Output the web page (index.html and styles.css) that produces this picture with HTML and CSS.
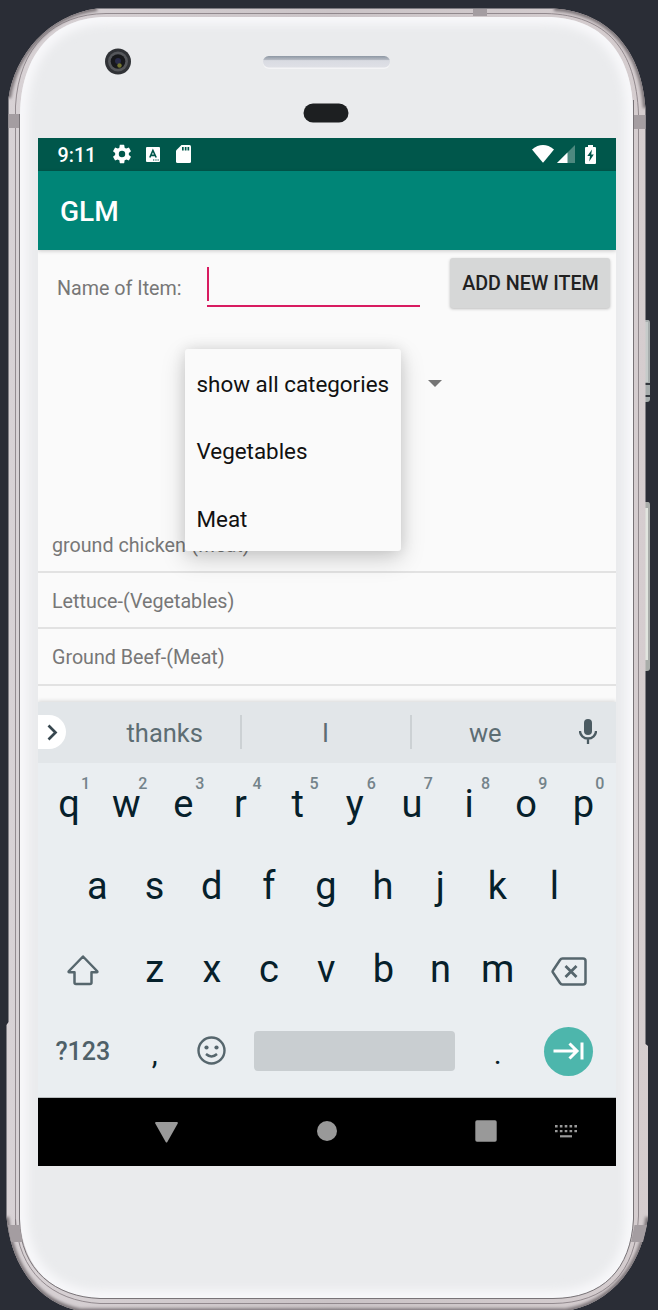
FILE: index.html
```html
<!DOCTYPE html>
<html lang="en">
<head>
<meta charset="utf-8">
<title>GLM</title>
<link rel="stylesheet" href="styles.css">
</head>
<body>
<div class="device">
  <svg class="shell" width="658" height="1310" viewBox="0 0 658 1310" aria-hidden="true">
    <defs>
      <linearGradient id="rimX" x1="0" x2="1" y1="0" y2="0">
        <stop offset="0" stop-color="#9c9498"/><stop offset=".006" stop-color="#d8d2d5"/>
        <stop offset=".5" stop-color="#cbc4c7"/><stop offset=".988" stop-color="#d5cdcf"/><stop offset="1" stop-color="#aaa2a5"/>
      </linearGradient>
      <linearGradient id="mesh" x1="0" x2="0" y1="0" y2="1">
        <stop offset="0" stop-color="#8d97a3"/><stop offset=".32" stop-color="#b5bac3"/><stop offset=".4" stop-color="#d9dbe2"/><stop offset="1" stop-color="#dfe0e6"/>
      </linearGradient>
      <filter id="soft" x="-10%" y="-10%" width="120%" height="120%"><feGaussianBlur stdDeviation="5"/></filter>
      <filter id="edge" x="-10%" y="-10%" width="120%" height="120%"><feGaussianBlur stdDeviation="1.800"/></filter>
      <clipPath id="outer"><path d="M97 8.500H554C610 12 642 52 645.500 108V1044L648 1046V1217C641 1268 610 1304 566 1311H80C38 1303 11 1266 6.500 1217V1025L8.500 1022V98C15 55 48 15 97 8.500Z"/></clipPath>
      <clipPath id="face"><path d="M106 17H546C602 17 633 54 633 114V1219C631 1269 603 1298 553 1298H100C56 1297 23 1271 20 1219V114C21 54 54 17 106 17Z"/></clipPath>
    </defs>
    <path d="M643 320h5q2 0 2 3v76q0 3-3 3h-4Z" fill="#a7adad"/>
    <path d="M645 322h3v60h-3Z" fill="#c6cbca"/>
    <path d="M643 383h7v2h-7Zm0 12h7v2h-7Z" fill="#33373d"/>
    <path d="M643 502h5q2 0 2 3v163q0 3-3 3h-4Z" fill="#a9adaa"/>
    <path d="M645 508h3v152h-3Z" fill="#e1e5df"/>
    <g clip-path="url(#outer)">
      <rect width="658" height="1310" fill="url(#rimX)"/>
      <path d="M8.500 98C15 55 48 15 97 8.500M554 8.500C610 12 642 52 645.500 108M648 1217C641 1268 610 1304 566 1311H80C38 1303 11 1266 6.500 1217" fill="none" stroke="#7b7478" stroke-width="5" filter="url(#edge)"/>
    </g>
    <path d="M15.500 1232V106C19 46 54 14 106 13.500H546C607 15 636 50 638.500 114V1216C636 1273 606 1303 553 1303.500H100C52 1301 18 1272 15.500 1219" fill="none" stroke="#81797d" stroke-width=".8"/>
    <path d="M106 17H546C602 17 633 54 633 114V1219C631 1269 603 1298 553 1298H100C56 1297 23 1271 20 1219V114C21 54 54 17 106 17Z" fill="#eaebed"/>
    <path d="M106 17H546C602 17 633 54 633 114V1219C631 1269 603 1298 553 1298H100C56 1297 23 1271 20 1219V114C21 54 54 17 106 17Z" fill="none" stroke="#f8f8fa" stroke-width="15" filter="url(#soft)" clip-path="url(#face)"/>
    <path d="M633.500 100V1219C631 1269 603 1298.500 553 1298.500H100C56 1297 20 1271 19.500 1219V114" fill="none" stroke="#787377"/>
    <path d="M473 9h14v7h-14ZM8.500 114H19v14H8.500ZM634 115h11.500v14H634ZM8 1225h11.500l3 17H11ZM634.500 1225h12.500l-4 17h-12Z" fill="#a49da1"/>
    <circle cx="118" cy="61.500" r="13" fill="#303236"/>
    <circle cx="118" cy="61.500" r="10" fill="#55575b"/>
    <circle cx="118" cy="61.500" r="7.300" fill="#17181b"/>
    <circle cx="118" cy="61" r="3" fill="#292b49"/>
    <circle cx="119.500" cy="65.500" r="2.200" fill="#73752f"/>
    <rect x="263" y="56" width="127" height="13" rx="6" fill="#f4f4f6"/>
    <rect x="263" y="56" width="127" height="11.500" rx="5.700" fill="url(#mesh)"/>
    <rect x="303.500" y="103.500" width="45" height="19" rx="9.500" fill="#1d1f21"/>
  </svg>

  <main class="screen">
    <header class="status">
      <span class="clock">9:11</span>
      <svg class="gear" width="22" height="22" viewBox="0 0 24 24" fill="#fff"><path d="M19.430 12.980c.040-.320.070-.640.070-.980s-.030-.660-.070-.980l2.110-1.650c.190-.150.240-.420.120-.640l-2-3.460c-.120-.220-.390-.300-.610-.220l-2.490 1c-.520-.400-1.080-.730-1.690-.980l-.380-2.650A.488.488 0 0 0 14 2h-4c-.250 0-.460.180-.490.420l-.380 2.650c-.610.250-1.170.590-1.690.980l-2.490-1c-.230-.090-.490 0-.610.220l-2 3.460c-.130.220-.070.490.120.640l2.110 1.650c-.040.320-.070.650-.070.980s.030.660.070.980l-2.110 1.650c-.190.150-.240.420-.120.640l2 3.460c.120.220.390.300.610.220l2.490-1c.520.400 1.080.730 1.690.980l.380 2.650c.030.240.240.420.490.420h4c.250 0 .460-.180.490-.420l.380-2.650c.610-.250 1.170-.590 1.690-.980l2.490 1c.230.090.490 0 .610-.220l2-3.460c.120-.220.070-.490-.120-.640zM12 15.500a3.500 3.500 0 1 1 0-7 3.500 3.500 0 0 1 0 7z"/></svg>
      <svg class="lang" width="14" height="15" viewBox="0 0 14 15"><rect width="14" height="15" rx="1" fill="#fff"/><path d="M3.800 10.500 6.900 3.500 10.200 10.500M5.100 8.400h3.800" fill="none" stroke="#00574b" stroke-width="1.600"/><path d="M7 12.500h1.300v1H7zm2.300 0h1.300v1H9.300zm2.200 0h1.300v1h-1.300z" fill="#00574b"/></svg>
      <svg class="card" width="15" height="18" viewBox="0 0 15 18"><path d="M5.500 0H13.500Q15 0 15 1.500V16.500Q15 18 13.500 18H1.500Q0 18 0 16.500V5.500Z" fill="#fff"/><path d="M6 2h1.700v3.500H6zm2.800 0h1.700v3.500H8.800zm2.700 0h1.700v3.500h-1.700z" fill="#00574b"/></svg>
      <span class="grow"></span>
      <svg class="wifi" width="22" height="18" viewBox="0 0 22 18"><path d="M0 4.500Q11-4.300 22 4.500L11.500 17.200Q11 17.700 10.500 17.200Z" fill="#fff"/></svg>
      <svg class="signal" width="18" height="18" viewBox="0 0 18 18"><path d="M18 0V18H0Z" fill="#4d897f"/><path d="M10.500 7.500V18H0Z" fill="#fff"/></svg>
      <svg class="battery" width="11" height="19" viewBox="0 0 11 19"><path d="M3 0h5v2h2q1 0 1 1v15q0 1-1 1H1q-1 0-1-1V3q0-1 1-1h2Z" fill="#fff"/><path d="M7 4.500 2.300 11H5l-.8 5.500L8.800 9.500H6.200Z" fill="#00574b"/></svg>
    </header>
    <div class="appbar">GLM</div>

    <section class="content">
      <div class="form">
        <label class="label">Name of Item:</label>
        <div class="field"><span class="caret"></span></div>
        <button class="add">ADD NEW ITEM</button>
      </div>
      <div class="picker">
        <svg class="arrow" width="14" height="7" viewBox="0 0 14 7"><path d="M0 0H14L7 7Z" fill="#757575"/></svg>
        <div class="menu">
          <div class="option">show all categories</div>
          <div class="option">Vegetables</div>
          <div class="option">Meat</div>
        </div>
      </div>
      <div class="list">
        <div class="item">ground chicken-(Meat)</div>
        <div class="item">Lettuce-(Vegetables)</div>
        <div class="item">Ground Beef-(Meat)</div>
      </div>
    </section>

    <section class="keyboard">
      <div class="suggest">
        <div class="more"><svg width="11" height="17" viewBox="0 0 11 17"><path d="M1.500 1.500 8.500 8.500 1.500 15.500" fill="none" stroke="#37474f" stroke-width="2.700"/></svg></div>
        <div class="word first">thanks</div>
        <div class="word">I</div>
        <div class="word last">we</div>
        <svg class="mic" width="18" height="25" viewBox="0 0 18 25"><rect x="5" y="0" width="8" height="16" rx="4" fill="#4b5b62"/><path d="M1 12a8 7.500 0 0 0 16 0M9 19.500V25" fill="none" stroke="#4b5b62" stroke-width="2.300"/></svg>
      </div>
      <div class="row top">
        <div class="key">q<sup>1</sup></div><div class="key">w<sup>2</sup></div><div class="key">e<sup>3</sup></div><div class="key">r<sup>4</sup></div><div class="key">t<sup>5</sup></div><div class="key">y<sup>6</sup></div><div class="key">u<sup>7</sup></div><div class="key">i<sup>8</sup></div><div class="key">o<sup>9</sup></div><div class="key">p<sup>0</sup></div>
      </div>
      <div class="row home">
        <div class="key">a</div><div class="key">s</div><div class="key">d</div><div class="key">f</div><div class="key">g</div><div class="key">h</div><div class="key">j</div><div class="key">k</div><div class="key">l</div>
      </div>
      <div class="row">
        <div class="key wide"><svg class="shift" width="32" height="31" viewBox="0 0 32 31"><path d="M16 1.500 30 16Q31 17.200 29.500 17.200H24.500V27.500Q24.500 29 23 29H9Q7.500 29 7.500 27.500V17.200H2.500Q1 17.200 2 16Z" fill="none" stroke="#56666d" stroke-width="2.500" stroke-linejoin="round"/></svg></div>
        <div class="key">z</div><div class="key">x</div><div class="key">c</div><div class="key">v</div><div class="key">b</div><div class="key">n</div><div class="key">m</div>
        <div class="key wide"><svg class="erase" width="36" height="29" viewBox="0 0 36 29"><path d="M11.500 1.500H32Q34.500 1.500 34.500 4V25Q34.500 27.500 32 27.500H11.500Q10 27.500 9 26L2 15.500Q1.200 14.500 2 13.500L9 3Q10 1.500 11.500 1.500Z" fill="none" stroke="#56666d" stroke-width="2.500"/><path d="M14.500 9 25.500 20M25.500 9 14.500 20" stroke="#56666d" stroke-width="2.800"/></svg></div>
      </div>
      <div class="row">
        <div class="key wide symbols">?123</div>
        <div class="key comma">,</div>
        <div class="key"><svg class="smile" width="29" height="29" viewBox="0 0 29 29"><circle cx="14.500" cy="14.500" r="13" fill="none" stroke="#56666d" stroke-width="2.400"/><circle cx="9.500" cy="11.500" r="2.100" fill="#56666d"/><circle cx="19.500" cy="11.500" r="2.100" fill="#56666d"/><path d="M9 18Q14.500 23 20 18" fill="none" stroke="#56666d" stroke-width="2.400"/></svg></div>
        <div class="key spacekey"><span class="space"></span></div>
        <div class="key stop">.</div>
        <div class="key wide"><div class="enter"><svg width="31" height="18" viewBox="0 0 31 18"><path d="M.5 9H24M16.500 1.500 24 9 16.500 16.500M29 .5V17.500" fill="none" stroke="#fff" stroke-width="3"/></svg></div></div>
      </div>
    </section>

    <nav class="nav">
      <svg class="back" width="23" height="21" viewBox="0 0 23 21"><path d="M1 0H22Q23.200.3 22.700 1.500L12.300 20Q11.500 21 10.700 20L.3 1.500Q-.2.300 1 0Z" fill="#999"/></svg>
      <svg class="homebtn" width="20" height="20" viewBox="0 0 20 20"><circle cx="10" cy="10" r="10" fill="#999"/></svg>
      <svg class="recent" width="22" height="22" viewBox="0 0 22 22"><rect x=".3" y=".3" width="21.400" height="21.400" rx="1.700" fill="#999"/></svg>
      <svg class="ime" width="22" height="13" viewBox="0 0 22 13"><path d="M0 1.300H22M0 6.100H22" stroke="#999" stroke-width="2.400" stroke-dasharray="2.600 2.250"/><path d="M5 11.300H17" stroke="#999" stroke-width="2.200"/></svg>
    </nav>
  </main>
</div>
</body>
</html>
```

FILE: styles.css
```css
* { box-sizing: border-box; }
body { margin: 0; background: #2a2d36; font-family: Roboto, sans-serif; }
svg { display: block; flex: none; }
.device { position: relative; width: 658px; height: 1310px; overflow: hidden; padding: 138px 42px 0 38px; }
.shell { position: absolute; left: 0; top: 0; }
.screen { position: relative; width: 578px; height: 1028px; display: flex; flex-direction: column; background: #fafafa; overflow: hidden; }

.status { height: 33px; flex: none; display: flex; align-items: center; background: #00574b; padding: 0 20.500px 0 19.500px; }
.clock { width: 44px; color: #fff; font-size: 19.700px; font-weight: 500; line-height: 33px; padding-top: 1px; }
.gear { margin: 0 0 1px 9px; }
.lang { margin: 0 0 1px 13px; }
.card { margin: 0 0 1px 16.500px; }
.grow { flex: 1; }
.wifi, .signal, .battery { margin-bottom: 1px; }
.signal { margin-left: 3px; }
.battery { margin-left: 10px; }
.appbar { position: relative; z-index: 1; height: 78.500px; flex: none; padding: 2px 22px 0; background: #008577; color: #fff; font-size: 28px; font-weight: 500; line-height: 78px; box-shadow: 0 1px 4px rgba(0,0,0,.2); }

.content { height: 452px; flex: none; display: flex; flex-direction: column; }
.form { height: 67.500px; flex: none; display: flex; padding-left: 19px; }
.label { width: 149.500px; padding-top: 27px; font-size: 19.700px; line-height: 24px; color: #777; }
.field { width: 213.500px; height: 40px; margin-top: 17px; border-bottom: 2px solid #d81b60; }
.caret { display: block; width: 2.500px; height: 34px; margin-top: .5px; background: #d81b60; }
.add { width: 160px; height: 50px; margin: 8.500px 0 0 30px; padding: 1px 0 0 1px; border: 0; border-radius: 3px; background: #d6d7d7; color: #212121; font: 500 19.700px/50px Roboto, sans-serif; box-shadow: 0 1px 3px rgba(0,0,0,.25); }
.picker { position: relative; height: 200px; flex: none; padding: 62.500px 0 0 389.500px; }
.menu { position: absolute; z-index: 2; left: 147px; top: 32px; width: 216px; height: 202px; border-radius: 3px; background: #fafafa; box-shadow: 0 8px 24px rgba(0,0,0,.18), 0 0 14px rgba(0,0,0,.1); }
.option { height: 67.500px; padding: 1.500px 11.500px 0; font-size: 22.400px; line-height: 67px; color: #111; white-space: nowrap; }
.list { display: flex; flex-direction: column; }
.item { height: 56.200px; padding: 2px 14px 0; border-bottom: 2px solid #e2e2e2; color: #777; font-size: 19.700px; line-height: 54px; }

.keyboard { position: relative; height: 396.500px; flex: none; background: #eaeef1; box-shadow: 0 -1px 4px rgba(0,0,0,.14); border-bottom: 1px solid #b9bdbf; }
.suggest { height: 61.500px; display: flex; align-items: center; background: #e2e6e9; color: #5d6d73; }
.more { width: 28px; height: 34px; border-radius: 0 17px 17px 0; background: #fff; display: flex; align-items: center; padding-left: 8.500px; }
.word { width: 170px; height: 34px; text-align: center; font-size: 25.500px; line-height: 37px; border-right: 2px solid #ccd1d4; }
.word.first { width: 175.500px; padding-left: 24px; }
.word.last { width: 149.500px; border: 0; padding-right: 2px; }
.mic { margin: 0 0 2px 18px; }
.row { height: 83px; display: flex; padding: 0 2.500px; }
.row.top { height: 81px; }
.row.home { padding-left: 30.800px; }
.key { position: relative; width: 57.150px; flex: none; display: flex; align-items: center; justify-content: center; color: #06202b; font-size: 38px; line-height: 44px; padding-bottom: 0; }
.key.wide { width: 85.700px; padding-right: 1px; }
.key sup { position: absolute; left: 40.500px; top: 13px; font-size: 16px; font-weight: 500; line-height: 16px; color: #74838a; }
.shift { margin-top: 4px; }
.erase { margin-top: 5px; }
.key.symbols { font-size: 25px; font-weight: 500; color: #4f6068; }
.smile { margin-bottom: 2px; }
.comma, .stop { font-size: 30px; padding-top: 4px; }
.key.spacekey { width: 228.600px; padding-bottom: 2px; }
.space { width: 201px; height: 40px; border-radius: 4px; background: #c9ced1; }
.enter { width: 49px; height: 49px; margin-bottom: 1px; border-radius: 50%; background: #4db6ac; display: flex; align-items: center; justify-content: center; }

.nav { height: 68px; flex: none; display: flex; align-items: center; background: #000; }
.back { margin-left: 117px; }
.homebtn { margin: 0 0 2px 138.500px; }
.recent { margin: 0 0 2px 138.500px; }
.ime { margin: 0 0 2px 58px; }
```
